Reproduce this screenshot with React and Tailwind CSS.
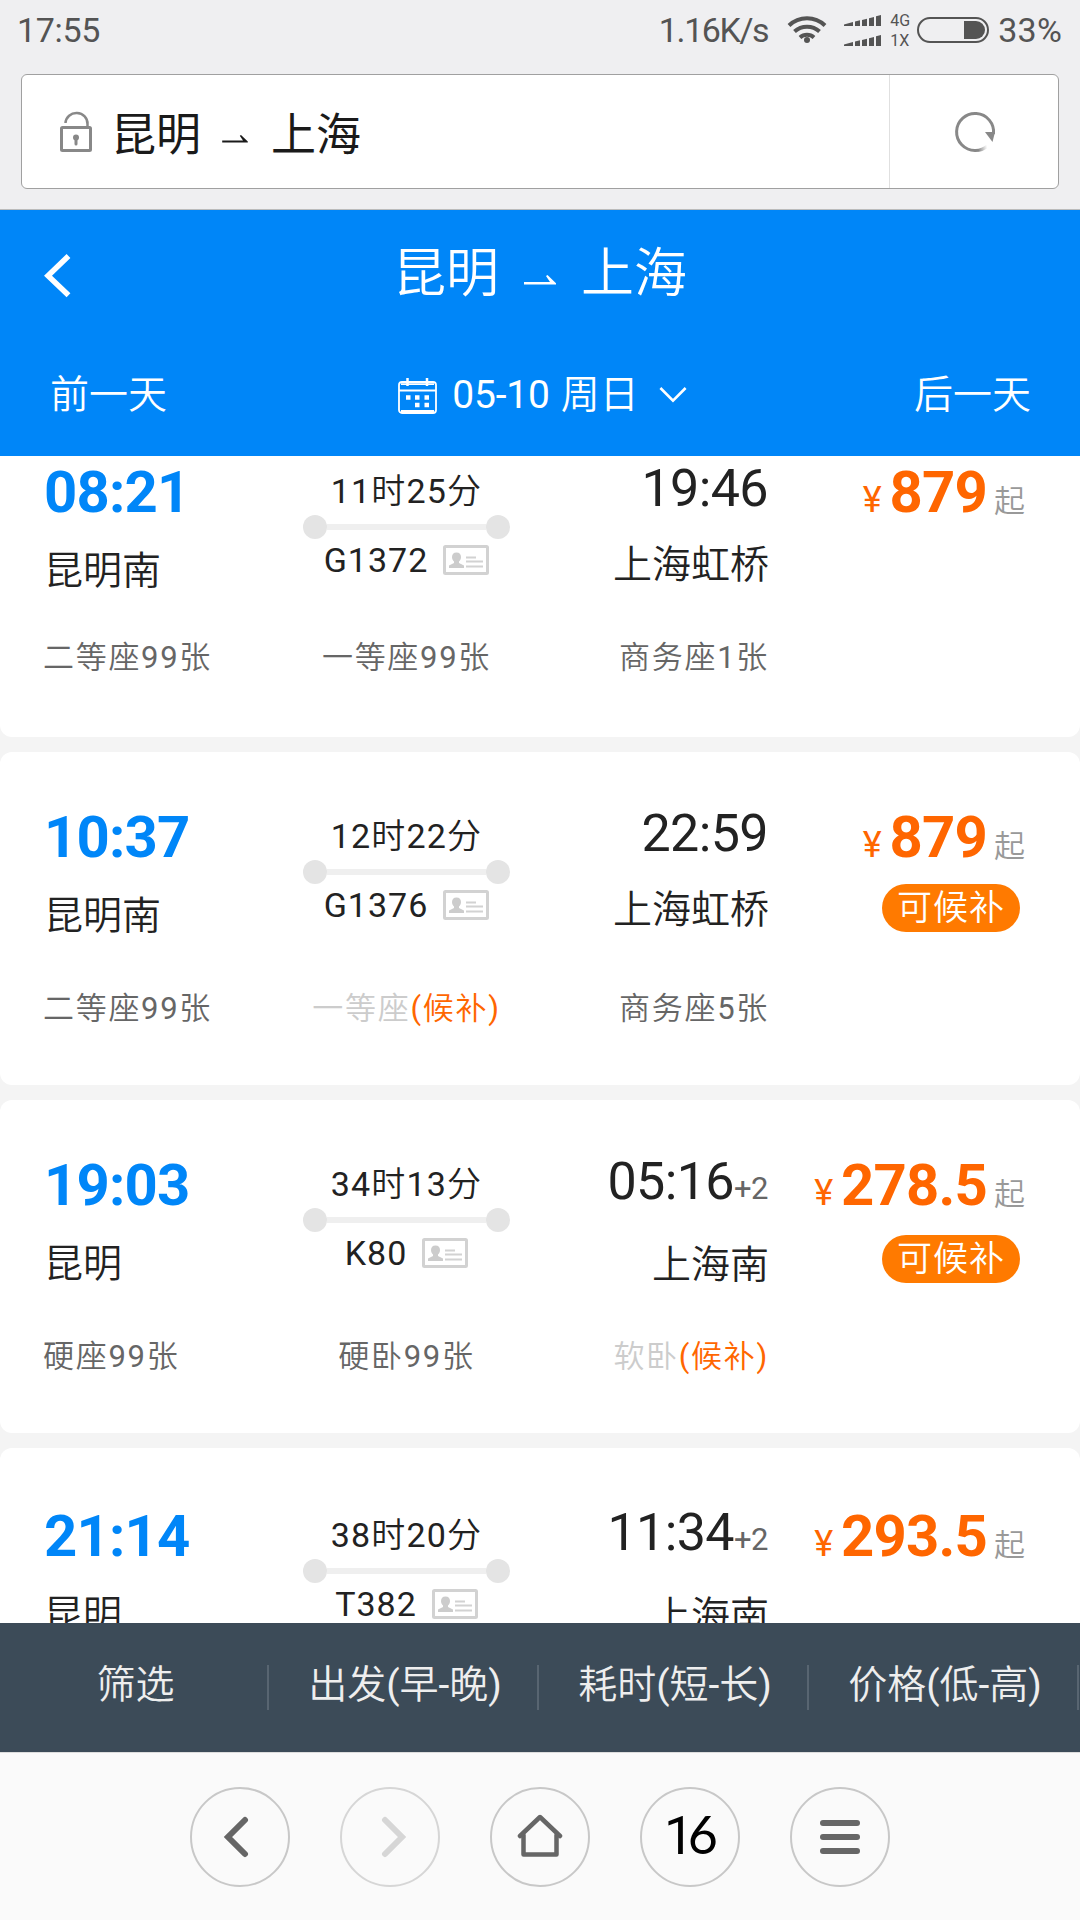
const trains = [
  {
    no: 'G1372',
    depart: '08:21',
    from: '昆明南',
    duration: '11时25分',
    arrive: '19:46',
    to: '上海虹桥',
    price: '879',
    card: 'h-[281px] pt-[6px] rounded-b-xl',
    main: 'h-[176px]',
    seats: [{ name: '二等座', left: '99张' }, { name: '一等座', left: '99张' }, { name: '商务座', left: '1张' }],
  },
  {
    no: 'G1376',
    depart: '10:37',
    from: '昆明南',
    duration: '12时22分',
    arrive: '22:59',
    to: '上海虹桥',
    price: '879',
    waitlist: 'mt-[7px]',
    card: 'h-[333px] pt-[55px] rounded-xl',
    main: 'h-[182px]',
    seats: [{ name: '二等座', left: '99张' }, { name: '一等座' }, { name: '商务座', left: '5张' }],
  },
  {
    no: 'K80',
    depart: '19:03',
    from: '昆明',
    duration: '34时13分',
    arrive: '05:16',
    days: '+2',
    to: '上海南',
    price: '278.5',
    waitlist: 'mt-[10px]',
    card: 'h-[333px] pt-[55px] rounded-xl',
    main: 'h-[182px]',
    seats: [{ name: '硬座', left: '99张' }, { name: '硬卧', left: '99张' }, { name: '软卧' }],
  },
  {
    no: 'T382',
    depart: '21:14',
    from: '昆明',
    duration: '38时20分',
    arrive: '11:34',
    days: '+2',
    to: '上海南',
    price: '293.5',
    card: 'h-[333px] pt-[58px] rounded-xl',
    main: 'h-[182px]',
    seats: [],
  },
];

const sorts = ['筛选', '出发(早-晚)', '耗时(短-长)', '价格(低-高)'];

function Harpoon({ className }) {
  return (
    <svg viewBox="0 0 32 10" className={className} fill="currentColor">
      <path d="M0 7h26l-4-6 1.500-1L32 8.200V9.500H0z" />
    </svg>
  );
}

function Signal() {
  return (
    <svg width="38" height="12" viewBox="0 0 38 12" fill="#545454">
      <path d="M0 9.500 9 7v4H0zM11 6.500l5-1.200V11h-5zM18 5l5-1.200V11h-5zM25 3.200 30 2v9h-5zM32 1.200 37 0v11h-5z" />
    </svg>
  );
}

function StatusBar() {
  return (
    <div className="flex h-[74px] items-start pl-[17px] pr-[18px] text-[34px] leading-[60px] text-[#545454]">
      <span className="tracking-[-0.3px]">17:55</span>
      <span className="ml-auto tracking-[-1.4px]">1.16K/s</span>
      <svg width="40" height="30" viewBox="0 0 40 30" className="ml-[19px] mt-[14px]" fill="none" stroke="#545454" strokeWidth="4">
        <path d="M2 11.500a26 26 0 0 1 36 0M7.500 17.500a18.500 18.500 0 0 1 25 0M13 23.500a10.500 10.500 0 0 1 14 0" />
        <circle cx="20" cy="26" r="3" fill="#545454" stroke="none" />
      </svg>
      <div className="ml-[17px] mt-[15px] flex flex-col gap-[8px]">
        <Signal />
        <Signal />
      </div>
      <div className="ml-[8px] mt-[11px] flex w-[22px] flex-col text-[16px] leading-[20px]">
        <span>4G</span>
        <span>1X</span>
      </div>
      <div className="ml-[5px] mt-[17px] flex h-[26px] w-[72px] justify-end rounded-full border-2 border-[#545454] p-[2px]">
        <div className="h-[18px] w-[21px] rounded-r-full bg-[#545454]" />
      </div>
      <span className="ml-[9px] tracking-[0.2px]">33%</span>
    </div>
  );
}

function AddressBar() {
  return (
    <div className="mx-[21px] flex h-[115px] items-center rounded-md border border-[#a0a0a0] bg-white">
      <svg width="34" height="42" viewBox="0 0 34 42" className="ml-[37px]" fill="none" stroke="#888" strokeWidth="3">
        <rect x="2.500" y="16.500" width="29" height="23" rx="1" />
        <path d="M6.500 12a11 10.500 0 0 1 22 1v3" strokeWidth="2.500" />
        <circle cx="17" cy="26.500" r="3" fill="#888" stroke="none" />
        <path d="M17 27v6" strokeLinecap="round" />
      </svg>
      <div className="ml-[18px] flex items-center font-['Noto_Sans_CJK_SC',sans-serif] text-[45px] leading-[60px] text-[#1a1a1a]">
        <span>昆明</span>
        <Harpoon className="ml-[20px] mt-[15px] h-[8px] w-[28px]" />
        <span className="ml-[22px]">上海</span>
      </div>
      <div className="ml-auto flex h-full w-[169px] items-center justify-center border-l border-[#e0e0e0] pl-[2px]">
        <svg width="42" height="42" viewBox="0 0 42 42" fill="none">
          <defs>
            <linearGradient id="fade" x1="20" y1="38" x2="33" y2="35" gradientUnits="userSpaceOnUse">
              <stop offset="0.300" stopColor="#888" />
              <stop offset="1" stopColor="#888" stopOpacity="0" />
            </linearGradient>
          </defs>
          <path d="M39.500 23A18.500 18.500 0 1 0 21 39.500" stroke="#888" strokeWidth="3" />
          <path d="M20.500 39.500A18.500 18.500 0 0 0 33.500 35" stroke="url(#fade)" strokeWidth="3" />
          <path d="M31 21h10l-2.500 10z" fill="#888" />
        </svg>
      </div>
    </div>
  );
}

function PageHeader() {
  return (
    <header className="h-[246px] bg-[#0086f8] text-white">
      <div className="flex h-[126px] items-center">
        <svg width="28" height="44" viewBox="0 0 28 44" className="ml-[44px] mt-[6px]" fill="none" stroke="#fff" strokeWidth="5.500">
          <path d="M24.500 2 4 21.700l20.500 19.600" />
        </svg>
        <h1 className="ml-[321px] mt-[2px] flex items-center text-[53px] leading-[60px]">
          <span>昆明</span>
          <Harpoon className="ml-[25px] mt-[11px] h-[10px] w-[32px]" />
          <span className="ml-[25px]">上海</span>
        </h1>
      </div>
      <div className="flex h-[117px] items-center justify-between pl-[50px] pr-[49px] text-[39px] leading-[60px]">
        <span>前一天</span>
        <div className="flex items-center pl-[4px]">
          <svg width="39" height="38" viewBox="0 0 39 38" className="mt-[3px]" fill="none" stroke="#fff" strokeWidth="1.800">
            <rect x="1" y="5" width="37" height="31" rx="3" />
            <path d="M1 13.500h37M3 34h33M3 7.200h33" />
            <path d="M9.500 1v8M29 1v8" strokeWidth="2.500" />
            <path d="M8 20.500h4.500M17 20.500h4.500M26.500 20.500H31M17 28h4.500M26.500 28H31" strokeWidth="4.500" />
          </svg>
          <span className="ml-[15px] tracking-[-0.2px]">05-10</span>
          <span className="ml-[11px]">周日</span>
          <svg width="28" height="18" viewBox="0 0 30 18" className="ml-[20px]" fill="none" stroke="#fff" strokeWidth="2.800">
            <path d="M1.500 1.500 15 15 28.500 1.500" />
          </svg>
        </div>
        <span>后一天</span>
      </div>
    </header>
  );
}

function IdCard() {
  return (
    <svg width="46" height="30" viewBox="0 0 46 30" className="ml-[15px]" fill="none" stroke="#d2d2d2">
      <rect x="1.500" y="1.500" width="43" height="27" rx="1" strokeWidth="3" />
      <path d="M23 12.500h10M23 16.500h17M23 21.500h17" strokeWidth="2" />
      <path d="M13.500 7.500c-3 0-4.500 2-4.500 4.500 0 2 1 3.500 2 4.500v1.500l-5 2.500v2.500h15v-2.500l-5-2.500v-1.500c1-1 2-2.500 2-4.500 0-2.500-1.500-4.500-4.500-4.500z" fill="#ccc" stroke="none" />
    </svg>
  );
}

function Seat({ seat }) {
  if (seat.left) {
    return <span className="text-[#666]">{seat.name}{seat.left}</span>;
  }
  // 没票时显示候补
  return (
    <span className="text-[#ccc]">
      {seat.name}
      <span className="text-[#ff6600]">(候补)</span>
    </span>
  );
}

function TrainCard({ train }) {
  const [first, second, third] = train.seats;

  return (
    <div className={`shrink-0 bg-white text-[#222] ${train.card}`}>
      <div className={`flex ${train.main}`}>
        <div className="flex w-[255px] flex-col pl-[44px]">
          <span className="text-[58px] font-bold leading-[60px] tracking-[-0.8px] text-[#0086f8]">{train.depart}</span>
          <span className="mt-[27px] text-[39px] leading-[44px]">{train.from}</span>
        </div>
        <div className="flex w-[303px] flex-col items-center pt-[9px]">
          <span className="text-[34px] leading-[40px] tracking-[1.2px]">{train.duration}</span>
          <div className="mt-[4px] flex w-[207px] items-center">
            <div className="size-[24px] rounded-full bg-[#e4e4e4]" />
            <div className="h-[6px] flex-1 bg-[#efefef]" />
            <div className="size-[24px] rounded-full bg-[#e4e4e4]" />
          </div>
          <div className="mt-[1px] flex items-center text-[34px] leading-[40px] tracking-[1px]">
            {train.no}
            <IdCard />
          </div>
        </div>
        <div className="-mt-[3px] flex w-[210px] flex-col items-end">
          <div className="text-[52px] leading-[60px] tracking-[-0.6px]">
            {train.arrive}
            {train.days && <span className="text-[31px] tracking-[-0.5px] text-[#666]">{train.days}</span>}
          </div>
          <span className="-mr-[1px] mt-[24px] text-[39px] leading-[44px]">{train.to}</span>
        </div>
        <div className="flex flex-1 flex-col items-end">
          <div className="flex items-baseline pr-[55px] leading-[60px] text-[#ff6600]">
            <span className="text-[36px]">¥</span>
            <span className="ml-[8px] text-[58px] font-bold tracking-[-0.8px]">{train.price}</span>
            <span className="ml-[7px] text-[31px] text-[#999]">起</span>
          </div>
          {train.waitlist && (
            <span className={`mr-[60px] h-[48px] w-[138px] rounded-full bg-[#ff7a00] text-center text-[35px] leading-[49px] tracking-[1px] text-white ${train.waitlist}`}>
              可候补
            </span>
          )}
        </div>
      </div>
      {first && (
        <div className="flex text-[31px] leading-[40px] tracking-[1.7px]">
          <div className="w-[255px] whitespace-nowrap pl-[43px]"><Seat seat={first} /></div>
          <div className="w-[303px] text-center"><Seat seat={second} /></div>
          <div className="w-[211px] text-right"><Seat seat={third} /></div>
        </div>
      )}
    </div>
  );
}

function SortBar() {
  return (
    <div className="flex h-[129px] items-center bg-[#3c4b58] text-[39px] leading-[44px] text-[#eee]">
      {sorts.map((label) => (
        <div key={label} className="flex h-[45px] w-[270px] shrink-0 items-center justify-center whitespace-nowrap border-r-2 border-[#586571] pb-[6px] pl-[4px] first:w-[269px]">
          {label}
        </div>
      ))}
    </div>
  );
}

function NavButton({ children, muted }) {
  return (
    <div className={`flex size-[100px] items-center justify-center rounded-full border-2 ${muted ? 'border-[#d6d6d6]' : 'border-[#c8c8c8]'}`}>
      {children}
    </div>
  );
}

function BrowserNav() {
  return (
    <nav className="flex h-[168px] justify-center gap-[50px] border-t border-[#ddd] bg-[#fafafa] pt-[34px]">
      <NavButton>
        <svg width="26" height="42" viewBox="0 0 26 42" className="mr-[8px]" fill="none" stroke="#666" strokeWidth="6" strokeLinecap="round">
          <path d="M22 4 5 21l17 17" />
        </svg>
      </NavButton>
      <NavButton muted>
        <svg width="26" height="42" viewBox="0 0 26 42" className="ml-[8px]" fill="none" stroke="#d6d6d6" strokeWidth="6" strokeLinecap="round">
          <path d="m4 4 17 17L4 38" />
        </svg>
      </NavButton>
      <NavButton>
        <svg width="46" height="44" viewBox="0 0 46 44" className="-mt-[2px]" fill="none" stroke="#666" strokeWidth="4.500" strokeLinejoin="round" strokeLinecap="round">
          <path d="M3 22 23 3l20 19" />
          <path d="M6.500 21v19.500h33V21" />
        </svg>
      </NavButton>
      <NavButton>
        <span className="-mt-[4px] mr-[4px] text-[53px] leading-[60px] tracking-[-6px] text-black">
          1<span className="font-['Lato',sans-serif] text-[52px]">6</span>
        </span>
      </NavButton>
      <NavButton>
        <div className="flex flex-col gap-[8px]">
          <div className="h-[6px] w-[40px] rounded-full bg-[#666]" />
          <div className="h-[6px] w-[40px] rounded-full bg-[#666]" />
          <div className="h-[6px] w-[40px] rounded-full bg-[#666]" />
        </div>
      </NavButton>
    </nav>
  );
}

export default function App() {
  return (
    <div className="flex h-[1920px] w-[1080px] flex-col overflow-hidden bg-[#f4f4f4] font-['Roboto','Noto_Sans_CJK_SC_DemiLight','Noto_Sans_CJK_SC',sans-serif]">
      <div className="h-[210px] border-b border-[#bbb] bg-[#efeff1]">
        <StatusBar />
        <AddressBar />
      </div>
      <PageHeader />
      <main className="flex h-[1167px] flex-col gap-[15px] overflow-hidden">
        {trains.map((train) => (
          <TrainCard key={train.no} train={train} />
        ))}
      </main>
      <SortBar />
      <BrowserNav />
    </div>
  );
}
